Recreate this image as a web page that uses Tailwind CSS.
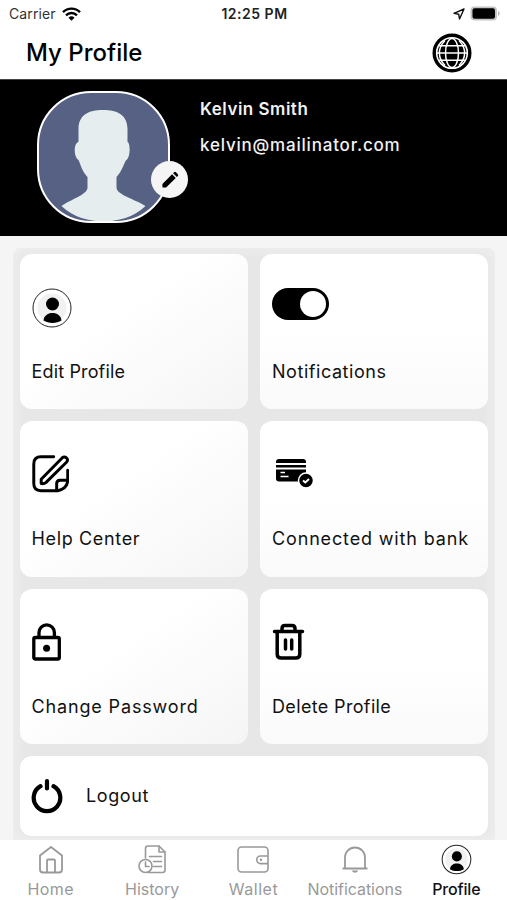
<!DOCTYPE html>
<html lang="en">
<head>
  <meta charset="UTF-8">
  <meta name="viewport" content="width=device-width, initial-scale=1.0">
  <title>My Profile</title>
  <script src="https://cdn.jsdelivr.net/npm/@tailwindcss/browser@4"></script>
</head>
<body class="bg-[#f5f5f5] font-['Inter',sans-serif] text-black">
<div class="w-[507px] h-[900px] overflow-hidden flex flex-col">

  <!-- Status bar -->
  <div class="h-[27px] shrink-0 bg-white flex items-center justify-between pl-[9px] pr-[7px] text-[14px] leading-none">
    <div class="w-[120px] flex items-center gap-[6px] text-[#333]">
      <span class="tracking-[0.1px]">Carrier</span>
      <svg class="w-[19px] h-[14px]" viewBox="0 0 19 14" fill="none" stroke="#000" stroke-width="2.4">
        <path d="M1 5.2a12 12 0 0 1 17 0M4 8.3a7.8 7.8 0 0 1 11 0"/>
        <path d="M9.5 13.8 6.500 10.700a4.300 4.300 0 0 1 6 0z" fill="#000" stroke="none"/>
      </svg>
    </div>
    <span class="font-semibold text-[#222] tracking-[0.5px]">12:25 PM</span>
    <div class="w-[120px] flex items-center justify-end gap-[5px]">
      <svg class="w-[12px] h-[12px]" viewBox="0 0 12 12" fill="none" stroke="#111" stroke-width="1.4" stroke-linejoin="round">
        <path d="M11 1 1 5.300l4.700.9.800 4.800z"/>
      </svg>
      <svg class="w-[30px] h-[15px]" viewBox="0 0 30 15">
        <rect x=".5" y=".5" width="26.500" height="14" rx="4" fill="#c4c4c4"/>
        <rect x="2.500" y="2.300" width="22.500" height="10.400" rx="2.200"/>
        <path d="M28 5c2.200.8 2.200 4.200 0 5z" fill="#b5b5b5"/>
      </svg>
    </div>
  </div>

  <!-- Header -->
  <header class="h-[52.500px] shrink-0 bg-white border-b border-[#444] flex items-center justify-between pl-[26px] pr-[35px]">
    <h1 class="text-[24px] font-medium leading-none">My Profile</h1>
    <svg class="w-[40px] h-[40px]" viewBox="0 0 40 40" fill="none">
      <circle cx="20" cy="20" r="17.800" fill="#fff" stroke="#000" stroke-width="3.400"/>
      <circle cx="20" cy="20" r="14.500" fill="#000"/>
      <g stroke="#fff" stroke-width="1.500">
        <ellipse cx="20" cy="20" rx="6.500" ry="14.500"/>
        <path d="M5 20h30M7 12.800h26M7 27.200h26"/>
        <path d="M13 7.500C5.500 15 5.500 25 13 32.500M27 7.500C34.500 15 34.500 25 27 32.500"/>
      </g>
    </svg>
  </header>

  <!-- User banner -->
  <section class="h-[156px] shrink-0 bg-black flex pl-[37px] pt-[11.500px] text-[#f2f2f2]">
    <div class="relative w-[133px] h-[132px]">
      <div class="w-full h-full rounded-[54px] border-[2.500px] border-white bg-[#566184] overflow-hidden">
        <svg class="w-full h-full" viewBox="0 0 128 128">
          <path fill="#e6edee" d="M39 49V36C39 22 49 17 63.500 17S88 22 88 36v13c3 1 3 15-1 18-2 1-4 11-10 17v11c1 7 18 11 29 18-6 6-13 9.500-20 12q-22 7-44 0c-7-2.500-14-6-20-12 10-7 25-11 26-18V84c-6-6-8-16-9-17-5-3-5-17 0-18z"/>
        </svg>
      </div>
      <div class="absolute left-[114px] top-[70px] w-[37px] h-[37px] rounded-full bg-[#f5f5f5] flex items-center justify-center">
        <svg class="w-[18px] h-[18px]" viewBox="0 0 19 19">
          <path d="M1.500 13.600 11.700 3.400l3.900 3.900L5.400 17.500H2.500q-1 0-1-1zM12.800 2.300l1-1q1-.8 2 0l2 2q.8 1 0 2l-1 1z"/>
        </svg>
      </div>
    </div>
    <div class="pl-[30px] pt-[6px] flex flex-col gap-[12px] font-medium text-[17px] leading-[24px]">
      <p class="font-semibold tracking-[0.5px]">Kelvin Smith</p>
      <p class="tracking-[0.8px]">kelvin@mailinator.com</p>
    </div>
  </section>

  <!-- Menu -->
  <main class="h-[604.500px] shrink-0 pl-[13px] pr-[12px] pt-[12px]">
    <div class="h-full bg-[#e7e7e7] shadow-[inset_0_0_14px_#f2f2f2] rounded-t-lg px-[7px] pt-[6px] text-[18px] leading-[24px] text-[#111]">
      <div class="grid grid-cols-2 gap-[12px]">

        <div class="h-[155.500px] rounded-xl bg-gradient-to-br from-white from-40% to-[#f5f5f5] pl-[11.500px] pt-[34px] flex flex-col">
          <div class="h-[72px]">
            <svg class="w-[40px] h-[40px]" viewBox="0 0 40 40">
              <circle cx="20" cy="20" r="19" fill="#fff" stroke="#222" stroke-width="1"/>
              <circle cx="20" cy="20" r="14.500" fill="#f1f1f1"/>
              <circle cx="20.500" cy="16" r="6.500"/>
              <path d="M11.500 32.500C12 27.500 16 25 20.500 25s8.500 2.500 9 7.500c-5 3.300-13 3.300-18 0z"/>
            </svg>
          </div>
          <p class="tracking-[0.15px]">Edit Profile</p>
        </div>

        <div class="h-[155.500px] rounded-xl bg-gradient-to-b from-white from-50% to-[#fafafa] pl-[12px] pt-[34px] flex flex-col">
          <div class="h-[72px]">
            <div class="w-[57px] h-[32px] rounded-full bg-black flex items-center justify-end pr-[3px]">
              <div class="w-[26px] h-[26px] rounded-full bg-white"></div>
            </div>
          </div>
          <p class="tracking-[0.550px]">Notifications</p>
        </div>

        <div class="h-[155.500px] rounded-xl bg-gradient-to-br from-white from-40% to-[#f5f5f5] pl-[11.500px] pt-[34px] flex flex-col">
          <div class="h-[72px]">
            <svg class="w-[37.500px] h-[37.500px]" viewBox="0 0 38 38" fill="none" stroke="#000" stroke-width="3" stroke-linecap="round" stroke-linejoin="round">
              <path d="M22 1.800H9Q1.800 1.800 1.800 9v20Q1.800 36.200 9 36.200h17Q36.200 34 36.200 25V15.500"/>
              <path d="M25 36V29q0-3.500 3.500-3.500H36"/>
              <path d="M9.300 29V24.500L30.500 3q2.200-2 4.400 0t0 4.400L14 28Q12.500 29.300 9.300 29z"/>
            </svg>
          </div>
          <p class="tracking-[0.650px]">Help Center</p>
        </div>

        <div class="h-[155.500px] rounded-xl bg-gradient-to-b from-white from-50% to-[#fafafa] pl-[12px] pt-[34px] flex flex-col">
          <div class="h-[72px] pl-[3px] pt-[3px]">
            <svg class="w-[38px] h-[30px]" viewBox="0 0 38 30">
              <path d="M1 4Q1 1 4 1h24q3 0 3 3v1H1zM1 7h30v2.500H1zM1 11.500h30V20q0 3.500-3.500 3.500H4Q1 23.500 1 20.500z"/>
              <path d="M5.500 14.500h4.500M5.500 18.500h8" stroke="#fff" stroke-width="1.500"/>
              <circle cx="31" cy="22.500" r="7.500" stroke="#fff" stroke-width="1.500"/>
              <path d="m28 22.500 2.300 2 3.700-3.500" fill="none" stroke="#fff" stroke-width="2"/>
            </svg>
          </div>
          <p class="tracking-[0.850px] whitespace-nowrap">Connected with bank</p>
        </div>

        <div class="h-[155.500px] rounded-xl bg-gradient-to-br from-white from-40% to-[#f5f5f5] pl-[11.500px] pt-[34px] flex flex-col">
          <div class="h-[72px]">
            <svg class="w-[29px] h-[38px]" viewBox="0 0 29 38" fill="none" stroke="#000" stroke-width="3.300">
              <rect x="1.800" y="14.500" width="25.500" height="21.500" rx="1.500"/>
              <path d="M7 14V9.500a7.700 7.700 0 0 1 15.400 0V14"/>
              <circle cx="14.600" cy="25.200" r="3.500" fill="#000" stroke="none"/>
            </svg>
          </div>
          <p class="tracking-[0.850px]">Change Password</p>
        </div>

        <div class="h-[155.500px] rounded-xl bg-gradient-to-b from-white from-50% to-[#fafafa] pl-[12px] pt-[34px] flex flex-col">
          <div class="h-[72px]">
            <svg class="w-[33px] h-[37px]" viewBox="0 0 33 37" fill="none" stroke="#000" stroke-width="3.500" stroke-linecap="round" stroke-linejoin="round">
              <path d="M2.500 8.500h28M10 8V5.500q0-3 3-3h7q3 0 3 3V8"/>
              <path d="M5.200 9v22q0 4 4 4h14.600q4 0 4-4V9M13.500 17v9M19.700 17v9"/>
            </svg>
          </div>
          <p class="tracking-[0.350px]">Delete Profile</p>
        </div>

        <div class="col-span-2 h-[79.500px] rounded-xl bg-white pl-[11px] flex items-center gap-[23px]">
          <svg class="w-[32px] h-[36px]" viewBox="0 0 32 36" fill="none" stroke="#000" stroke-width="4.200" stroke-linecap="round">
            <path d="M16 3v7.500M9.500 8.200a13.300 13.300 0 1 0 13 0"/>
          </svg>
          <p class="tracking-[0.600px]">Logout</p>
        </div>

      </div>
    </div>
  </main>

  <!-- Tab bar -->
  <nav class="h-[60px] shrink-0 bg-white grid grid-cols-5 pt-[4px] text-[16px] leading-[20px] text-[#999]">
    <div class="flex flex-col items-center gap-[4px]">
      <svg class="w-[30px] h-[31px]" viewBox="0 0 30 31" fill="none" stroke="#999" stroke-width="1.800" stroke-linejoin="round">
        <path d="M4 11.500 15 3l11 8.500v14q0 3-3 3H7q-3 0-3-3z"/>
        <path d="M11 28V16.500q0-1 1-1h6q1 0 1 1V28"/>
      </svg>
      <span class="tracking-[0.400px]">Home</span>
    </div>
    <div class="flex flex-col items-center gap-[4px]">
      <svg class="w-[30px] h-[31px]" viewBox="0 0 30 31" fill="none" stroke="#999" stroke-width="1.600" stroke-linecap="round" stroke-linejoin="round">
        <path d="M8.500 14V4.500Q8.500 2 11 2h11l6 6v18q0 2.500-2.500 2.500H11"/>
        <path d="M22 2v6h6M12.500 12.500h12M16.500 17.500h8M16.500 22.500h8"/>
        <circle cx="8.500" cy="22" r="6.500"/>
        <path d="M8.500 18v4.500h3.500"/>
      </svg>
      <span>History</span>
    </div>
    <div class="flex flex-col items-center gap-[4px]">
      <svg class="w-[32px] h-[31px]" viewBox="0 0 32 31" fill="none" stroke="#999" stroke-width="1.600">
        <rect x="1" y="3" width="30" height="25" rx="3.500"/>
        <path d="M31 12h-7.500a3.800 3.800 0 0 0 0 7.600H31"/>
        <circle cx="24" cy="15.800" r="1.200" fill="#999" stroke="none"/>
      </svg>
      <span class="tracking-[0.500px]">Wallet</span>
    </div>
    <div class="flex flex-col items-center gap-[4px]">
      <svg class="w-[30px] h-[31px]" viewBox="0 0 30 31" fill="none" stroke="#999" stroke-width="1.800">
        <path d="M5 24V13.500a10 10 0 0 1 20 0V24M2.500 24.500h25"/>
        <path d="M11.500 26.500h7q-3.500 4.500-7 0z" fill="#999" stroke="none"/>
      </svg>
      <span class="tracking-[-0.050px]">Notifications</span>
    </div>
    <div class="flex flex-col items-center gap-[4px] text-[#111]">
      <svg class="w-[31px] h-[31px]" viewBox="0 0 40 40">
        <circle cx="20" cy="20" r="18.500" fill="#fff" stroke="#222" stroke-width="1.300"/>
        <circle cx="20" cy="20" r="14.500" fill="#f1f1f1"/>
        <circle cx="20.500" cy="16" r="6.500"/>
        <path d="M11.500 32.500C12 27.500 16 25 20.500 25s8.500 2.500 9 7.500c-5 3.300-13 3.300-18 0z"/>
      </svg>
      <span class="font-medium tracking-[-0.150px]">Profile</span>
    </div>
  </nav>

</div>
</body>
</html>
